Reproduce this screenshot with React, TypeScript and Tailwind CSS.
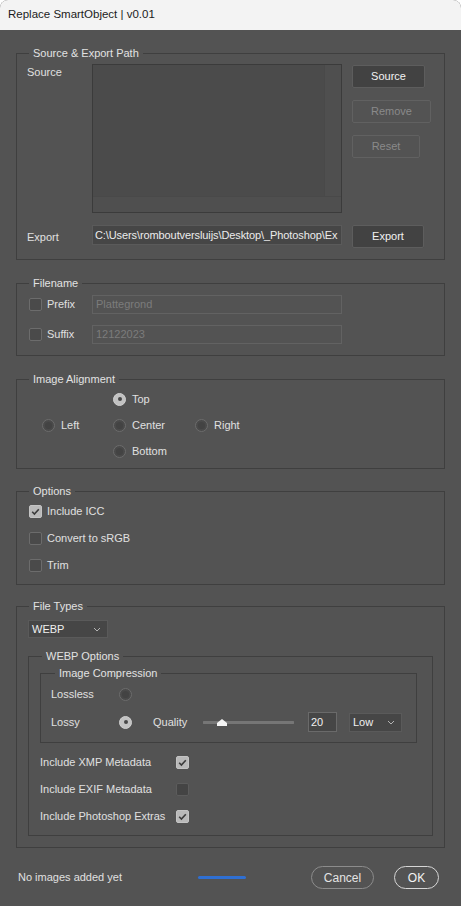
import React from "react";

function Box({ checked = false, dark = false }: { checked?: boolean; dark?: boolean }) {
  if (checked) {
    return (
      <div className="w-[13px] h-[13px] rounded-[2px] bg-[#b9b9b9] border border-[#c4c4c4] flex items-center justify-center shrink-0">
        <svg width="11" height="11" viewBox="0 0 11 11">
          <path d="M2.2 5.8 L4.4 8 L8.8 3.2" fill="none" stroke="#3b3b3b" strokeWidth="1.6" />
        </svg>
      </div>
    );
  }
  return (
    <div
      className={`w-[13px] h-[13px] rounded-[2px] border shrink-0 ${
        dark ? "bg-[#444444] border-[#5c5c5c]" : "bg-[#4a4a4a] border-[#6c6c6c]"
      }`}
    />
  );
}

function Radio({ checked = false }: { checked?: boolean }) {
  if (checked) {
    return (
      <div className="w-[13px] h-[13px] rounded-full bg-[#c2c2c2] border border-[#d0d0d0] flex items-center justify-center shrink-0">
        <div className="w-[4px] h-[4px] rounded-full bg-[#474747]" />
      </div>
    );
  }
  return (
    <div className="w-[13px] h-[13px] rounded-full bg-[#4a4a4a] border border-[#6c6c6c] flex items-center justify-center shrink-0">
      <div className="w-[7px] h-[7px] rounded-full bg-[#434343]" />
    </div>
  );
}

function Chevron() {
  return (
    <svg width="8" height="5" viewBox="0 0 8 5">
      <path d="M1 1 L4 4 L7 1" fill="none" stroke="#b4b4b4" strokeWidth="1" />
    </svg>
  );
}

function Panel({
  title,
  className = "",
  legendClass = "ml-[12px]",
  children,
}: {
  title: string;
  className?: string;
  legendClass?: string;
  children: React.ReactNode;
}) {
  return (
    <fieldset className={`border border-[#3f3f3f] ${className}`}>
      <legend className={`px-[4px] text-[11px] leading-[14px] text-[#e2e2e2] ${legendClass}`}>{title}</legend>
      {children}
    </fieldset>
  );
}

export default function App() {
  return (
    <div className="w-[461px] h-[906px] flex flex-col bg-[#535353] rounded-t-[8px] overflow-hidden font-['Liberation_Sans',Arial,sans-serif] text-[11px] text-[#e0e0e0]">
      {/* Title bar */}
      <div className="h-[30px] bg-[#f3f3f3] px-[8px] flex items-center text-[11.5px] text-[#1b1b1b]">
        Replace SmartObject | v0.01
      </div>

      <div className="flex flex-col px-4">
        {/* Source & Export Path */}
        <Panel title="Source & Export Path" className="mt-[16px]">
          <div className="pl-[10px] pt-[4px] pb-[11px]">
            <div className="flex">
              <div className="w-[65px] pt-[1px] leading-[14px]">Source</div>
              <div className="w-[250px] h-[149px] border border-[#3b3b3b] bg-[#4b4b4b] flex flex-col">
                <div className="flex flex-1">
                  <div className="flex-1" />
                  <div className="w-[17px] bg-[#4f4f4f] border-l border-[#494949]" />
                </div>
                <div className="h-[16px] bg-[#4f4f4f] border-t border-[#494949]" />
              </div>
              <div className="ml-[10px] flex flex-col items-start gap-[12px] pt-[1px]">
                <button className="w-[73px] h-[23px] rounded-[2px] bg-[#424242] border border-[#5d5d5d] text-[#f2f2f2]">
                  Source
                </button>
                <button className="w-[79px] h-[23px] rounded-[2px] bg-[#535353] border border-[#616161] text-[#8a8a8a]">
                  Remove
                </button>
                <button className="w-[68px] h-[23px] rounded-[2px] bg-[#535353] border border-[#616161] text-[#8a8a8a]">
                  Reset
                </button>
              </div>
            </div>
            <div className="mt-[12px] flex items-start">
              <div className="w-[65px] h-[23px] flex items-center pt-[1px]">Export</div>
              <div className="w-[250px] h-[20px] bg-[#464646] border border-[#5a5a5a] pl-[2px] flex items-center overflow-hidden whitespace-nowrap text-[#ececec] tracking-[-0.1px]">
                C:\Users\romboutversluijs\Desktop\_Photoshop\Ex
              </div>
              <button className="ml-[10px] w-[72px] h-[23px] rounded-[2px] bg-[#424242] border border-[#5d5d5d] text-[#f2f2f2]">
                Export
              </button>
            </div>
          </div>
        </Panel>

        {/* Filename */}
        <Panel title="Filename" className="mt-[16px]">
          <div className="pl-[12px] pt-[5px] pb-[11px] flex flex-col gap-[11px]">
            <div className="h-[19px] flex items-center">
              <Box />
              <span className="ml-[5px] w-[45px]">Prefix</span>
              <div className="w-[250px] h-[19px] border border-[#626262] pl-[3px] flex items-center text-[#7c7c7c]">
                Plattegrond
              </div>
            </div>
            <div className="h-[19px] flex items-center">
              <Box />
              <span className="ml-[5px] w-[45px]">Suffix</span>
              <div className="w-[250px] h-[19px] border border-[#626262] pl-[3px] flex items-center text-[#7c7c7c]">
                12122023
              </div>
            </div>
          </div>
        </Panel>

        {/* Image Alignment */}
        <Panel title="Image Alignment" className="mt-[16px]">
          <div className="pl-[25px] pb-[4px] grid grid-cols-[71px_82px_100px] grid-rows-[26px_26px_26px] items-center">
            <div />
            <div className="flex items-center">
              <Radio checked />
              <span className="ml-[6px]">Top</span>
            </div>
            <div />
            <div className="flex items-center">
              <Radio />
              <span className="ml-[6px]">Left</span>
            </div>
            <div className="flex items-center">
              <Radio />
              <span className="ml-[6px]">Center</span>
            </div>
            <div className="flex items-center">
              <Radio />
              <span className="ml-[6px]">Right</span>
            </div>
            <div />
            <div className="flex items-center">
              <Radio />
              <span className="ml-[6px]">Bottom</span>
            </div>
            <div />
          </div>
        </Panel>

        {/* Options */}
        <Panel title="Options" className="mt-[15px]">
          <div className="pl-[12px] pb-[5px] flex flex-col">
            <div className="h-[27px] flex items-center">
              <Box checked />
              <span className="ml-[5px]">Include ICC</span>
            </div>
            <div className="h-[27px] flex items-center">
              <Box />
              <span className="ml-[5px]">Convert to sRGB</span>
            </div>
            <div className="h-[27px] flex items-center">
              <Box />
              <span className="ml-[5px]">Trim</span>
            </div>
          </div>
        </Panel>

        {/* File Types */}
        <Panel title="File Types" className="mt-[14px]">
          <div className="px-[11px] pt-[7px] pb-[11px]">
            <div className="w-[80px] h-[18px] bg-[#464646] border border-[#5a5a5a] pl-[3px] pr-[6px] flex items-center justify-between text-[#f0f0f0]">
              <span>WEBP</span>
              <Chevron />
            </div>

            <Panel title="WEBP Options" className="mt-[11px]" legendClass="ml-[13px]">
              <div className="pl-[11px] pr-[15px] pt-[3px] pb-[5px]">
                <Panel title="Image Compression" legendClass="ml-[14px]">
                  <div className="pl-[10px] pb-[6px] flex flex-col">
                    <div className="h-[28px] flex items-center">
                      <span className="w-[68px]">Lossless</span>
                      <Radio />
                    </div>
                    <div className="h-[28px] flex items-center">
                      <span className="w-[68px]">Lossy</span>
                      <Radio checked />
                      <span className="ml-[21px] w-[50px]">Quality</span>
                      <svg width="91" height="12" viewBox="0 0 91 12">
                        <line x1="1" y1="6.5" x2="90" y2="6.5" stroke="#767676" strokeWidth="3" strokeLinecap="round" />
                        <polygon points="14,10 14,7 19,3 24,7 24,10" fill="#f4f4f4" />
                      </svg>
                      <div className="ml-[14px] w-[29px] h-[20px] bg-[#464646] border border-[#6a6a6a] pl-[2px] flex items-center text-[#f0f0f0]">
                        20
                      </div>
                      <div className="ml-[12px] w-[53px] h-[19px] bg-[#464646] border border-[#5a5a5a] pl-[3px] pr-[6px] flex items-center justify-between text-[#f0f0f0]">
                        <span>Low</span>
                        <Chevron />
                      </div>
                    </div>
                  </div>
                </Panel>

                <div className="mt-[6px] flex flex-col">
                  <div className="h-[27px] flex items-center">
                    <span className="w-[136px]">Include XMP Metadata</span>
                    <Box checked />
                  </div>
                  <div className="h-[27px] flex items-center">
                    <span className="w-[136px]">Include EXIF Metadata</span>
                    <Box dark />
                  </div>
                  <div className="h-[27px] flex items-center">
                    <span className="w-[136px]">Include Photoshop Extras</span>
                    <Box checked />
                  </div>
                </div>
              </div>
            </Panel>
          </div>
        </Panel>

        {/* Footer */}
        <div className="mt-[18px] h-[23px] pl-[2px] pr-[6px] flex items-center">
          <span className="w-[180px]">No images added yet</span>
          <div className="w-[48px] h-[3px] rounded-full bg-[#2f6fd2]" />
          <button className="ml-auto w-[63px] h-[23px] rounded-full border border-[#8c8c8c] text-[12px] text-[#e4e4e4]">
            Cancel
          </button>
          <button className="ml-[20px] w-[45px] h-[23px] rounded-full border border-[#d6d6d6] text-[12px] text-[#f4f4f4]">
            OK
          </button>
        </div>
      </div>
    </div>
  );
}
